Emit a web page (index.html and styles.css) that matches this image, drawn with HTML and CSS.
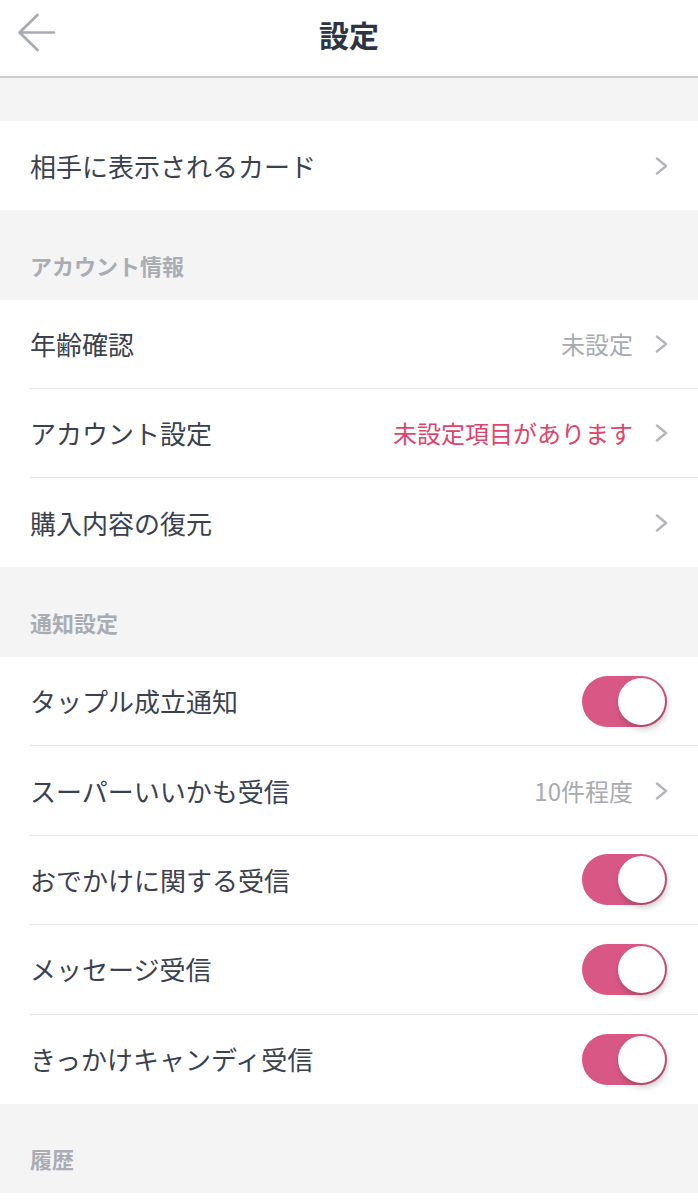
FILE: index.html
```html
<!DOCTYPE html>
<html lang="ja">
<head>
<meta charset="utf-8">
<title>設定</title>
<link rel="stylesheet" href="styles.css">
</head>
<body>
<header class="topbar">
  <button class="back" aria-label="戻る">
    <svg width="64" height="64" viewBox="0 0 64 64"><path d="M54 32.5H19.5M37.5 15L19.5 32.5L37.5 50" fill="none" stroke="#a8acb2" stroke-width="2.7" stroke-linecap="round" stroke-linejoin="round"/></svg>
  </button>
  <h1 class="title">設定</h1>
</header>
<main>
  <div class="gap"></div>
  <section class="group">
    <div class="row"><div class="row-inner"><span class="label">相手に表示されるカード</span><svg class="chev" width="13" height="18" viewBox="0 0 13 18"><path d="M2 1.5L11 9L2 16.5" fill="none" stroke="#b3b5b9" stroke-width="2.4" stroke-linecap="round" stroke-linejoin="round"/></svg></div></div>
  </section>

  <div class="sect">アカウント情報</div>
  <section class="group">
    <div class="row"><div class="row-inner"><span class="label">年齢確認</span><span class="value">未設定</span><svg class="chev" width="13" height="18" viewBox="0 0 13 18"><path d="M2 1.5L11 9L2 16.5" fill="none" stroke="#b3b5b9" stroke-width="2.4" stroke-linecap="round" stroke-linejoin="round"/></svg></div></div>
    <div class="row"><div class="row-inner"><span class="label">アカウント設定</span><span class="value alert">未設定項目があります</span><svg class="chev" width="13" height="18" viewBox="0 0 13 18"><path d="M2 1.5L11 9L2 16.5" fill="none" stroke="#b3b5b9" stroke-width="2.4" stroke-linecap="round" stroke-linejoin="round"/></svg></div></div>
    <div class="row"><div class="row-inner"><span class="label">購入内容の復元</span><svg class="chev" width="13" height="18" viewBox="0 0 13 18"><path d="M2 1.5L11 9L2 16.5" fill="none" stroke="#b3b5b9" stroke-width="2.4" stroke-linecap="round" stroke-linejoin="round"/></svg></div></div>
  </section>

  <div class="sect">通知設定</div>
  <section class="group notif">
    <div class="row"><div class="row-inner"><span class="label">タップル成立通知</span><span class="toggle on"><span class="knob"></span></span></div></div>
    <div class="row"><div class="row-inner"><span class="label">スーパーいいかも受信</span><span class="value">10件程度</span><svg class="chev" width="13" height="18" viewBox="0 0 13 18"><path d="M2 1.5L11 9L2 16.5" fill="none" stroke="#b3b5b9" stroke-width="2.4" stroke-linecap="round" stroke-linejoin="round"/></svg></div></div>
    <div class="row"><div class="row-inner"><span class="label">おでかけに関する受信</span><span class="toggle on"><span class="knob"></span></span></div></div>
    <div class="row"><div class="row-inner"><span class="label">メッセージ受信</span><span class="toggle on"><span class="knob"></span></span></div></div>
    <div class="row"><div class="row-inner"><span class="label">きっかけキャンディ受信</span><span class="toggle on"><span class="knob"></span></span></div></div>
  </section>

  <div class="sect last">履歴</div>
</main>
</body>
</html>
```
FILE: styles.css
```css
* { box-sizing: border-box; }
html, body { margin: 0; padding: 0; }
body {
  background: #ffffff;
  font-family: "Noto Sans CJK JP", "Noto Sans", sans-serif;
  color: #3b4150;
  width: 698px;
}
.topbar {
  height: 78px;
  border-bottom: 2px solid #cdcdcf;
  display: flex;
  align-items: center;
  justify-content: center;
  position: relative;
  background: #fff;
}
.back {
  position: absolute;
  left: 0;
  top: 0;
  width: 64px;
  height: 64px;
  padding: 0;
  border: 0;
  background: none;
}
.back svg { display: block; }
.title {
  margin: 0;
  font-size: 30px;
  font-weight: 700;
  color: #2e3442;
  line-height: 1;
  margin-top: -8px;
}
.gap { height: 43px; background: #f4f4f5; }
.group { background: #fff; }
.row { padding-left: 30px; }
.row-inner {
  height: 89px;
  display: flex;
  align-items: center;
  padding-right: 30px;
  border-bottom: 1px solid #e5e5e8;
}
.notif .row-inner { height: 89.4px; }
.row:last-child .row-inner { border-bottom: 0; }
.label {
  font-size: 26px;
  flex: 1;
  line-height: 1;
  color: #3b4150;
}
.value {
  font-size: 24px;
  color: #a7abb1;
  line-height: 1;
  margin-right: 22px;
}
.value.alert { color: #e0446a; }
.chev {
  display: block;
  flex: none;
}
.sect {
  height: 90px;
  background: #f4f4f5;
  display: flex;
  align-items: flex-end;
  padding: 0 0 24px 30px;
  font-size: 22px;
  font-weight: 700;
  color: #a9adb3;
  line-height: 1;
}
.sect.last { height: 89px; }
.toggle {
  width: 85px;
  height: 51px;
  border-radius: 26px;
  background: #d95785;
  display: flex;
  align-items: center;
  justify-content: flex-end;
  padding-right: 2px;
  margin-right: 1px;
}
.knob {
  width: 47px;
  height: 47px;
  border-radius: 50%;
  background: #fff;
  box-shadow: 2px 4px 6px rgba(0,0,0,0.22);
}
```
